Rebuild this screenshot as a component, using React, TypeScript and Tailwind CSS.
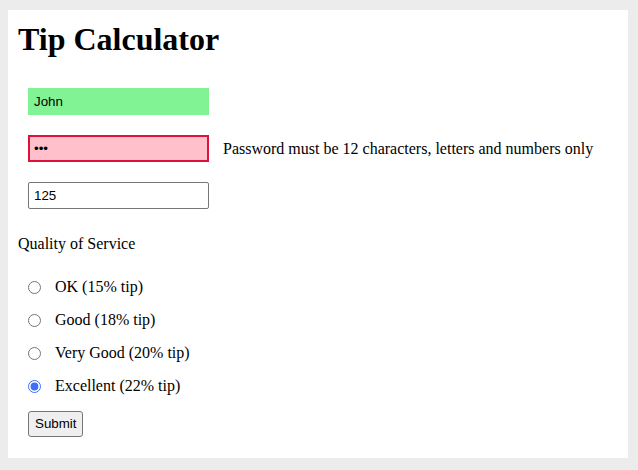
import React from 'react';

const options = [
  { id: 'ok', label: 'OK (15% tip)' },
  { id: 'good', label: 'Good (18% tip)' },
  { id: 'vgood', label: 'Very Good (20% tip)' },
  { id: 'excellent', label: 'Excellent (22% tip)' },
];

const App: React.FC = () => {
  return (
    <div className="h-[470px] bg-[#ececec] pt-[10px] pl-[8px] pr-[10px] pb-[12px] font-['Liberation_Serif',serif] text-black">
      <div className="h-full bg-white px-[10px] pt-[11px]">
        <h1 className="text-[32px] leading-[37px] font-bold">Tip Calculator</h1>

        <form className="flex flex-col" onSubmit={(e) => e.preventDefault()}>
          <div className="mt-[30px] ml-[10px] flex">
            <input
              type="text"
              defaultValue="John"
              className="w-[181px] h-[27px] bg-[#82f394] border border-[#82f394] pl-[5px] font-['Liberation_Sans',sans-serif] text-[13.33px] outline-none"
            />
          </div>

          <div className="mt-[20px] ml-[10px] flex items-center">
            <input
              type="password"
              defaultValue="abc"
              className="w-[181px] h-[27px] bg-[#ffc0cb] border-2 border-[#dc143c] pl-[4px] font-['Liberation_Sans',sans-serif] text-[13.33px] outline-none"
            />
            <span className="ml-[14px] text-[16px] leading-[18px]">
              Password must be 12 characters, letters and numbers only
            </span>
          </div>

          <div className="mt-[20px] ml-[10px] flex">
            <input
              type="text"
              defaultValue="125"
              className="w-[181px] h-[27px] bg-white border border-[#767676] rounded-[2px] pl-[5px] font-['Liberation_Sans',sans-serif] text-[13.33px] outline-none"
            />
          </div>

          <p className="mt-[26px] text-[16px] leading-[18px]">Quality of Service</p>

          <div className="mt-[25px] flex flex-col gap-[15px]">
            {options.map((o) => (
              <label key={o.id} className="flex items-center h-[18px] text-[16px] leading-[18px]">
                <input
                  type="radio"
                  name="quality"
                  defaultChecked={o.id === 'excellent'}
                  className="ml-[10px] w-[13px] h-[13px] m-0 accent-[#3f6ff5]"
                />
                <span className="ml-[14px]">{o.label}</span>
              </label>
            ))}
          </div>

          <div className="mt-[16px] ml-[10px] flex">
            <button
              type="submit"
              className="h-[26px] px-[6px] bg-[#efefef] border border-[#767676] rounded-[3px] font-['Liberation_Sans',sans-serif] text-[13.33px]"
            >
              Submit
            </button>
          </div>
        </form>
      </div>
    </div>
  );
};

export default App;
